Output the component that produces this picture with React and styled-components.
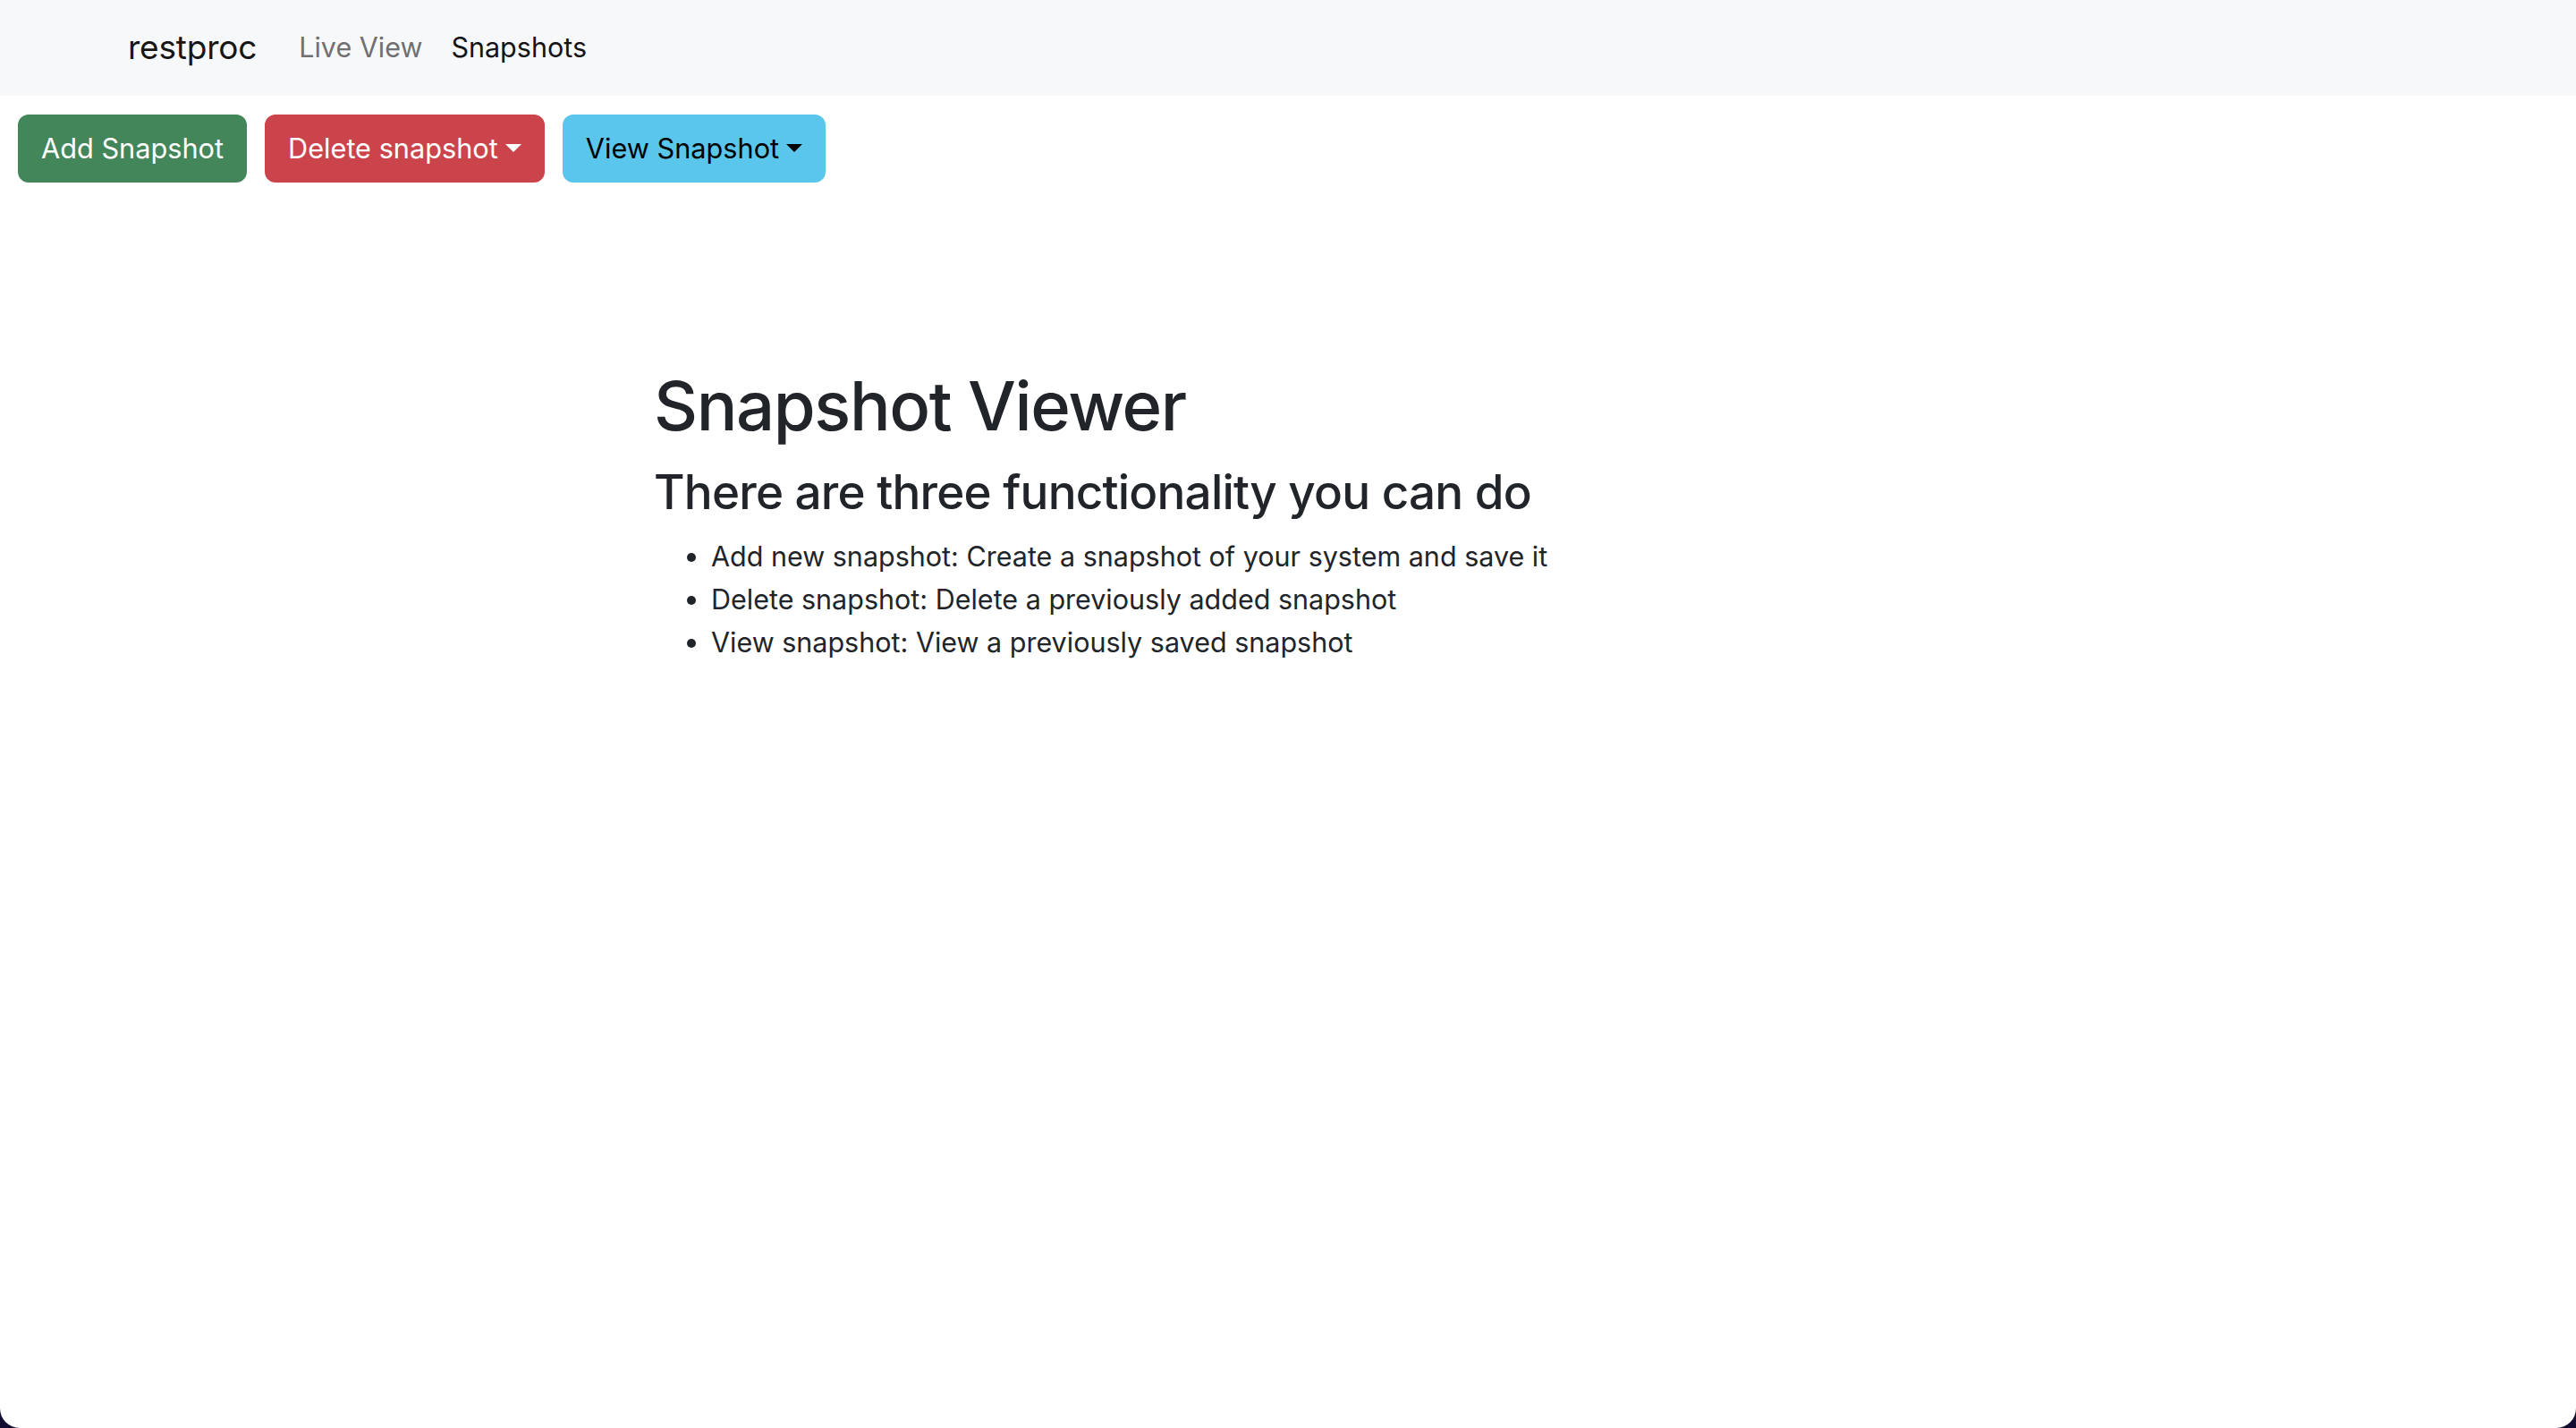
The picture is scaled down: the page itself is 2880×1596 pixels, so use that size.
import React from "react";
import styled, { createGlobalStyle } from "styled-components";

const GlobalStyle = createGlobalStyle`
  * {
    box-sizing: border-box;
  }
  body {
    margin: 0;
    background: #130c31;
    font-family: Inter, "Noto Sans", sans-serif;
    color: #212529;
  }
`;

const Page = styled.div`
  height: 100vh;
  background: #ffffff;
  border-bottom-left-radius: 22px;
  border-bottom-right-radius: 22px;
  overflow: hidden;
`;

const Navbar = styled.nav`
  height: 107px;
  background: #f7f8fa;
  display: flex;
  align-items: center;
  padding-left: 143px;
  padding-bottom: 2px;
`;

const Brand = styled.a`
  font-size: 37px;
  line-height: 1.5;
  color: #161616;
  text-decoration: none;
  margin-right: 31px;
  letter-spacing: -0.2px;
`;

const NavLink = styled.a`
  font-size: 30.5px;
  line-height: 1.5;
  padding: 0 16px;
  text-decoration: none;
  color: ${(p) => (p.active ? "#141414" : "#707070")};
`;

const Toolbar = styled.div`
  display: flex;
  gap: 20px;
  padding: 21px 20px 0;
`;

const Button = styled.button`
  display: inline-flex;
  align-items: center;
  height: 76px;
  padding: 0 24px;
  border: 2px solid ${(p) => p.bg};
  border-radius: 12px;
  background: ${(p) => p.bg};
  color: ${(p) => p.fg || "#ffffff"};
  font-family: inherit;
  font-size: 30.7px;
  line-height: 48px;
  cursor: pointer;
`;

const Caret = styled.span`
  display: inline-block;
  margin-left: 8px;
  margin-top: -2px;
  width: 0;
  height: 0;
  border-top: 9px solid currentColor;
  border-left: 9px solid transparent;
  border-right: 9px solid transparent;
`;

const Content = styled.main`
  padding: 204px 0 0 731px;
`;

const Title = styled.h1`
  margin: 0 0 20px;
  font-size: 76px;
  font-weight: 500;
  line-height: 1.2;
  letter-spacing: -1.4px;
  color: #212529;
`;

const Subtitle = styled.h3`
  margin: 0 0 15px;
  font-size: 53px;
  font-weight: 500;
  line-height: 1.2;
  letter-spacing: -0.8px;
  color: #212529;
`;

const FeatureList = styled.ul`
  margin: 0;
  padding-left: 64px;
  font-size: 30.5px;
  line-height: 48px;
  color: #212529;
`;

const features = [
  "Add new snapshot: Create a snapshot of your system and save it",
  "Delete snapshot: Delete a previously added snapshot",
  "View snapshot: View a previously saved snapshot",
];

export default function App() {
  return (
    <Page>
      <GlobalStyle />
      <Navbar>
        <Brand href="#">restproc</Brand>
        <NavLink href="#">Live View</NavLink>
        <NavLink href="#" active>
          Snapshots
        </NavLink>
      </Navbar>
      <Toolbar>
        <Button bg="#43865a">Add Snapshot</Button>
        <Button bg="#cb444b">
          Delete snapshot
          <Caret />
        </Button>
        <Button bg="#5bc6ec" fg="#000000">
          View Snapshot
          <Caret />
        </Button>
      </Toolbar>
      <Content>
        <Title>Snapshot Viewer</Title>
        <Subtitle>There are three functionality you can do</Subtitle>
        <FeatureList>
          {features.map((f) => (
            <li key={f}>{f}</li>
          ))}
        </FeatureList>
      </Content>
    </Page>
  );
}
